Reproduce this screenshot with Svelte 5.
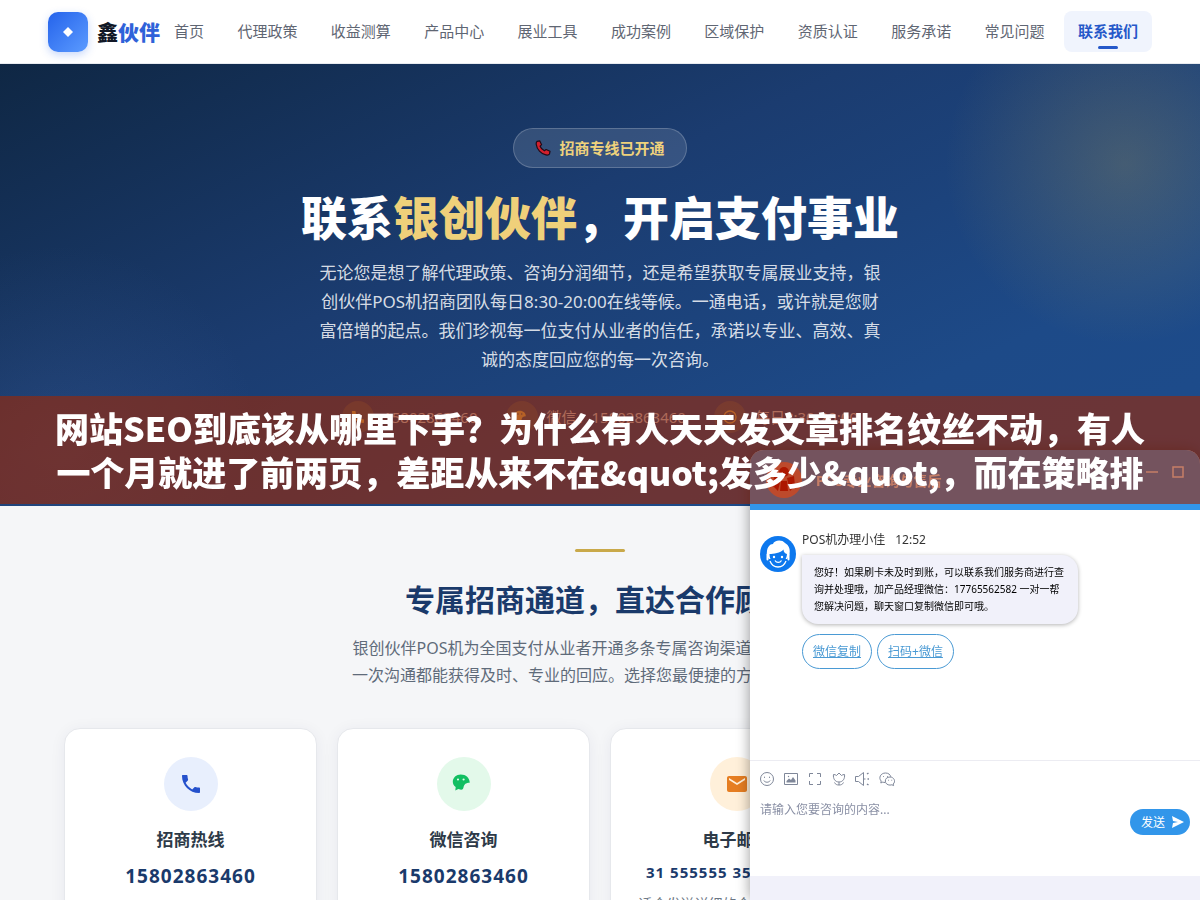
<script lang="ts">
  const navItems = [
    '首页',
    '代理政策',
    '收益测算',
    '产品中心',
    '展业工具',
    '成功案例',
    '区域保护',
    '资质认证',
    '服务承诺',
    '常见问题',
    '联系我们',
  ];
  const activeItem = '联系我们';

  const heroContacts = [
    { icon: 'phone', text: '15802863460' },
    { icon: 'wechat', text: '微信：15802863460' },
    { icon: 'clock', text: '每日8:30-20:00' },
  ];

  const channels = [
    { icon: 'phone', tone: 'blue', title: '招商热线', value: '15802863460', note: '每日8:30-20:00在线接听' },
    { icon: 'wechat', tone: 'green', title: '微信咨询', value: '15802863460', note: '添加微信获取代理政策' },
    { icon: 'mail', tone: 'orange', title: '电子邮箱', value: '31 555555 35@qq.com', note: '适合发送详细的合作需求与资料' },
    { icon: 'clock', tone: 'blue', title: '服务时间', value: '8:30-20:00', note: '全年无休在线服务' },
  ];

  const tools = ['smile', 'image', 'capture', 'flower', 'sound', 'chat'];
  const toolLabels: Record<string, string> = {
    smile: '表情',
    image: '图片',
    capture: '截图',
    flower: '评价',
    sound: '声音',
    chat: '微信',
  };

  let draft = $state('');
</script>

{#snippet glyph(name: string)}
  <svg viewBox="0 0 24 24" fill="currentColor" aria-hidden="true">
    {#if name === 'phone'}
      <path d="M6.62 10.79c-.27-.27.3-.3 0 0zM3.500 3H7.500c.55 0 1 .45 1 1 0 1.250.2 2.450.57 3.570.11.350.03.740-.25 1.020l-2.200 2.200c1.440 2.830 3.760 5.140 6.590 6.590l2.200-2.200c.27-.27.67-.36 1.020-.24 1.120.37 2.330.57 3.570.57.55 0 1 .45 1 1V20c0 .55-.45 1-1 1C10.610 21 3 13.390 3 4c0-.55.2-1 .5-1z" />
    {:else if name === 'wechat'}
      <path fill-rule="evenodd" d="M8.700 2.500C4.300 2.500.8 5.700.8 9.700c0 2.200 1.100 4 2.900 5.300L3.300 18.500l3-1.600 2.700.8c1.700.1 2.300-1.200 2.600-2.700.7-2.900 2.200-4.200 6.100-4.300C17.700 6 13.900 2.500 8.700 2.500zM6 6.400a1.100 1.100 0 1 1 0 2.200 1.100 1.100 0 0 1 0-2.200zm5.600 0a1.100 1.100 0 1 1 0 2.200 1.100 1.100 0 0 1 0-2.200z" />
    {:else if name === 'mail'}
      <path d="M20 4H4c-1.100 0-2 .9-2 2v12c0 1.100.9 2 2 2h16c1.100 0 2-.9 2-2V6c0-1.100-.9-2-2-2zm0 4-8 5-8-5V6l8 5 8-5z" />
    {:else}
      <path d="M12 2a10 10 0 1 0 0 20 10 10 0 0 0 0-20zm0 18a8 8 0 1 1 0-16 8 8 0 0 1 0 16zm.5-13H11v6l5.200 3.200.8-1.300-4.500-2.700z" />
    {/if}
  </svg>
{/snippet}

<div class="page">
  <header class="topbar">
    <div class="container topbar-inner">
      <a class="brand" href="#home">
        <span class="brand-mark">
          <svg viewBox="0 0 12 12" aria-hidden="true"><path d="M6 1l5 5-5 5-5-5z" fill="#fff" /></svg>
        </span>
        <span class="brand-name">鑫<em>伙伴</em></span>
      </a>
      <nav>
        {#each navItems as item}
          <a href="#nav" class:active={item === activeItem}>{item}</a>
        {/each}
      </nav>
    </div>
  </header>

  <section class="hero">
    <div class="badge">
      <svg viewBox="0 0 16 16" aria-hidden="true">
        <path
          d="M2.200 1.300 4.700.8l1.900 3.900-1.500 1.500c.8 2 2.300 3.600 4.300 4.600l1.700-1.300 3.900 1.800-.5 2.600c-.5 1-2 1.300-3.600 1C6 13.900 1.800 9.300 1.200 4.300c-.1-1.200.2-2.400 1-3z"
          fill="#d3202c" stroke="#200b18" stroke-width="1.200" stroke-linejoin="round"
        />
      </svg>
      招商专线已开通
    </div>
    <h1>联系<em>银创伙伴</em>，开启支付事业</h1>
    <p>
      无论您是想了解代理政策、咨询分润细节，还是希望获取专属展业支持，银创伙伴POS机招商团队每日8:30-20:00在线等候。一通电话，或许就是您财富倍增的起点。我们珍视每一位支付从业者的信任，承诺以专业、高效、真诚的态度回应您的每一次咨询。
    </p>
    <ul class="hero-contacts">
      {#each heroContacts as contact}
        <li>
          <span class="dot">{@render glyph(contact.icon)}</span>
          {contact.text}
        </li>
      {/each}
    </ul>
  </section>

  <section class="channels">
    <span class="rule"></span>
    <h2>专属招商通道，直达合作顾问</h2>
    <p class="lead">
      银创伙伴POS机为全国支付从业者开通多条专属咨询渠道，确保您的每一次沟通都能获得及时、专业的回应。选择您最便捷的方式，立即沟通
    </p>
    <div class="cards">
      {#each channels as channel}
        <article class="card">
          <span class="card-icon {channel.tone}">{@render glyph(channel.icon)}</span>
          <h3>{channel.title}</h3>
          <div class="value" class:small={channel.icon === 'mail'}>{channel.value}</div>
          <div class="note">{channel.note}</div>
        </article>
      {/each}
    </div>
  </section>
</div>

<aside class="chat">
  <header class="chat-head">
    <span class="chat-logo">
      <svg viewBox="0 0 36 36" aria-hidden="true">
        <circle cx="18" cy="18" r="18" fill="#e8806f" />
        <circle cx="18" cy="10" r="5" fill="#c00000" />
        <path d="M8 14l7 2-3 13-5-5zM28 14l-7 2 3 13 5-5zM15 19h6l1 10h-8z" fill="#c00000" />
      </svg>
    </span>
    <strong>POS专业咨询与售后</strong>
    <button aria-label="最小化"><svg viewBox="0 0 12 12"><path d="M0 6h12" /></svg></button>
    <button aria-label="最大化"><svg viewBox="0 0 12 12"><path d="M1 1h10v10H1z" /></svg></button>
  </header>

  <div class="messages">
    <svg class="avatar" viewBox="0 0 36 36" aria-hidden="true">
      <circle cx="18" cy="18" r="18" fill="#0d78ee" />
      <path d="M7 20C6 11 10 8 13 8c1-4 9-5 12-1 4 2 6 7 4 13l-2 3H9z" fill="#fff" />
      <path d="M9.500 18c4 0 11-1 14-4.500 0 2.500 1.500 4 3.500 4.500-.5 6-4 10-9 10s-8.500-4-8.500-10z" fill="#0d78ee" />
      <circle cx="14" cy="21" r="1.200" fill="#fff" />
      <circle cx="22" cy="21" r="1.200" fill="#fff" />
      <path d="M10 25c1.500 4 4.500 6 8 6s6.500-2 8-6M15 24.500c1.500 2.500 5 2.500 6.500 0" fill="none" stroke="#fff" stroke-width="1.300" />
      <path d="M7.500 18.500v5M28.500 18.500v5" stroke="#fff" stroke-width="2" stroke-linecap="round" />
    </svg>
    <div class="message">
      <div class="meta"><span>POS机办理小佳</span><time>12:52</time></div>
      <div class="bubble">
        您好！如果刷卡未及时到账，可以联系我们服务商进行查询并处理哦，加产品经理微信：17765562582 一对一帮您解决问题，聊天窗口复制微信即可哦。
      </div>
      <div class="quick">
        <a href="#copy">微信复制</a>
        <a href="#scan">扫码+微信</a>
      </div>
    </div>
  </div>

  <form class="composer" onsubmit={(e) => e.preventDefault()}>
    <div class="tools">
      {#each tools as tool}
        <button type="button" aria-label={toolLabels[tool]}>
          <svg viewBox="0 0 16 16">
            {#if tool === 'smile'}
              <circle cx="8" cy="8" r="6.500" />
              <path d="M4.800 9.500c1.200 2.300 5.200 2.300 6.400 0M5.500 5.700v1.200M10.500 5.700v1.200" />
            {:else if tool === 'image'}
              <path d="M1.500 2.500h13v11h-13z" />
              <path d="M3.500 11.500V10L6 7.500l2 1.500 2-3 2.500 3.500v2z" fill="currentColor" stroke="none" />
              <circle cx="5.500" cy="5.500" r=".7" fill="currentColor" stroke="none" />
            {:else if tool === 'capture'}
              <path d="M2.500 6V2.500H6M10 2.500h3.500V6M13.500 10v3.500H10M6 13.500H2.500V10" />
            {:else if tool === 'flower'}
              <path d="M2.500 3.500c1.200 0 2.200.3 3 1L8 2l2.500 2.500c.8-.7 1.800-1 3-1 .6 4-1.500 7.500-5.500 7.500S1.900 7.500 2.500 3.500zM8 11v3M3.500 11.500c1 2 2.500 2.500 4.500 2.500s3.500-.5 4.500-2.500" />
            {:else if tool === 'sound'}
              <path d="M.5 5.500h3l5-4v13l-5-4h-3zM8.500 8h2" />
              <path d="M12 3l1.500-1M12.500 8H14M12 13l1.500 1" stroke-width="1.500" />
            {:else}
              <path d="M6 11.500c-.8 0-1.500-.1-2.200-.4L1.800 12l.4-2C-.8 7 1.500 2 6.500 2c2.800 0 4.800 1.500 5.300 3.800" />
              <path d="M11 6c-2.800 0-4.700 1.700-4.700 4s2 4.100 4.700 4.100c.7 0 1.300-.1 1.900-.3l1.700.8-.4-1.600C17.100 10.500 15 6 11 6zM4.500 5v.8M8.500 5v.8M9.500 8.800v.8M12.700 8.800v.8" />
            {/if}
          </svg>
        </button>
      {/each}
    </div>
    <div class="entry">
      <textarea aria-label="咨询内容" placeholder="请输入您要咨询的内容..." bind:value={draft}></textarea>
      <button class="send" type="submit">
        发送
        <svg viewBox="0 0 14 14" aria-hidden="true"><path d="M1 1l12 6-12 6 1-5 5-1-5-1z" fill="#fff" /></svg>
      </button>
    </div>
  </form>
  <div class="chat-foot"></div>
</aside>

<div class="banner">
  <div class="banner-text">
    网站SEO到底该从哪里下手？为什么有人天天发文章排名纹丝不动，有人<br />一个月就进了前两页，差距从来不在&amp;quot;发多少&amp;quot;，而在策略排
  </div>
</div>

<style>
  :global(body) {
    font-family: 'Noto Sans', 'Noto Sans CJK SC', sans-serif;
    color: #2d3748;
  }

  .page {
    height: 100vh;
    overflow: hidden;
    background: #f5f6f8;
  }

  em {
    font-style: normal;
  }

  a {
    text-decoration: none;
  }

  button {
    font-family: inherit;
    border: none;
    background: none;
    padding: 0;
    cursor: pointer;
  }

  .container {
    max-width: 1200px;
    margin: 0 auto;
    padding: 0 48px;
  }

  .topbar {
    background: #fff;
    border-bottom: 1px solid #e8ebf0;
  }

  .topbar-inner {
    height: 63px;
    display: flex;
    align-items: center;
    justify-content: space-between;
  }

  .brand {
    display: flex;
    align-items: center;
    gap: 9px;
    color: #111827;
  }

  .brand-mark {
    width: 40px;
    height: 40px;
    border-radius: 10px;
    background: linear-gradient(135deg, #2563eb, #5b9bff);
    box-shadow: 0 3px 8px rgba(37, 99, 235, 0.25);
    display: flex;
    align-items: center;
    justify-content: center;
  }

  .brand-mark svg {
    width: 12px;
    height: 12px;
  }

  .brand-name {
    font-size: 21px;
    font-weight: 800;
    line-height: 40px;
    white-space: nowrap;
  }

  .brand-name em {
    color: #2f62d9;
  }

  nav {
    display: flex;
    justify-content: space-between;
    flex: 1;
  }

  nav a {
    position: relative;
    padding: 0 14px;
    border-radius: 8px;
    font-size: 15px;
    line-height: 41px;
    color: #5f6673;
    white-space: nowrap;
  }

  nav a.active {
    background: #f0f4fd;
    color: #2558c9;
    font-weight: 600;
  }

  nav a.active::after {
    content: '';
    position: absolute;
    left: 50%;
    bottom: 3px;
    width: 20px;
    height: 3px;
    border-radius: 2px;
    background: #2558c9;
    transform: translateX(-50%);
  }

  .hero {
    display: flex;
    flex-direction: column;
    align-items: center;
    padding: 64px 24px 73px;
    text-align: center;
    color: #fff;
    background:
      radial-gradient(circle at 1125px 100px, rgba(201, 169, 74, 0.23), transparent 180px),
      radial-gradient(circle at 60px 380px, rgba(90, 130, 200, 0.14), transparent 200px),
      linear-gradient(155deg, #0f2744 0%, #1b3c70 40%, #1d4a88 75%, #1d4c8c 100%);
  }

  .badge {
    display: flex;
    align-items: center;
    gap: 8px;
    padding: 0 21px;
    border: 1px solid rgba(255, 255, 255, 0.2);
    border-radius: 20px;
    background: rgba(255, 255, 255, 0.12);
    color: #efd27c;
    font-size: 15px;
    font-weight: 600;
    line-height: 38px;
  }

  .badge svg {
    width: 16px;
    height: 16px;
  }

  h1 {
    margin: 20px 0 12px;
    font-size: 46px;
    font-weight: 800;
    line-height: 58px;
  }

  h1 em {
    color: #efd07a;
  }

  .hero p {
    max-width: 570px;
    margin: 0;
    font-size: 17px;
    line-height: 29px;
    color: rgba(255, 255, 255, 0.84);
  }

  .hero-contacts {
    display: flex;
    gap: 28px;
    margin: 27px 0 0;
    padding: 0;
    list-style: none;
    font-size: 15px;
    line-height: 32px;
    color: rgba(255, 255, 255, 0.75);
  }

  .hero-contacts li {
    display: flex;
    align-items: center;
    gap: 9px;
  }

  .dot {
    width: 32px;
    height: 32px;
    border-radius: 50%;
    background: rgba(201, 169, 74, 0.2);
    color: #d8b860;
    display: flex;
    align-items: center;
    justify-content: center;
  }

  .dot svg {
    width: 16px;
    height: 16px;
  }

  .channels {
    display: flex;
    flex-direction: column;
    align-items: center;
    max-width: 1072px;
    margin: 0 auto;
    padding: 43px 64px 60px;
    text-align: center;
  }

  .rule {
    width: 50px;
    height: 3px;
    border-radius: 2px;
    background: #c9a94a;
  }

  h2 {
    margin: 28px 0 15px;
    font-size: 30px;
    font-weight: 700;
    line-height: 40px;
    color: #1a3a6b;
  }

  .lead {
    max-width: 500px;
    margin: 0 0 39px;
    font-size: 16px;
    line-height: 27px;
    color: #5f6b7a;
  }

  .cards {
    align-self: stretch;
    display: grid;
    grid-template-columns: repeat(4, 1fr);
    gap: 20px;
  }

  .card {
    display: flex;
    flex-direction: column;
    align-items: center;
    padding: 28px 20px;
    border: 1px solid #e6e8ec;
    border-radius: 16px;
    background: #fff;
    box-shadow: 0 2px 16px rgba(20, 40, 80, 0.06);
  }

  .card-icon {
    width: 54px;
    height: 54px;
    border-radius: 50%;
    display: flex;
    align-items: center;
    justify-content: center;
  }

  .card-icon svg {
    width: 24px;
    height: 24px;
  }

  .blue {
    background: #e8effd;
    color: #2551cc;
  }

  .green {
    background: #e3f9ea;
    color: #12bf62;
  }

  .orange {
    background: #fff0da;
    color: #e67e22;
  }

  h3 {
    margin: 16px 0 8px;
    font-size: 17px;
    font-weight: 700;
    line-height: 26px;
    color: #2d3a48;
  }

  .value {
    font-size: 19px;
    font-weight: 700;
    line-height: 30px;
    letter-spacing: 1px;
    white-space: nowrap;
    color: #1a3a6b;
  }

  .value.small {
    font-size: 15px;
    line-height: 23px;
  }

  .note {
    margin-top: 8px;
    font-size: 14px;
    line-height: 24px;
    color: #6b7684;
  }

  .chat {
    position: fixed;
    right: 0;
    bottom: 0;
    width: 450px;
    max-width: 100%;
    height: 50vh;
    display: flex;
    flex-direction: column;
    overflow: hidden;
    border-radius: 14px 14px 0 0;
    background: #fff;
    box-shadow: 0 0 14px rgba(0, 0, 0, 0.4);
  }

  .chat-head {
    display: flex;
    align-items: center;
    gap: 14px;
    height: 60px;
    flex-shrink: 0;
    padding: 0 16px;
    background: #3296ea;
    color: #fff;
  }

  .chat-head strong {
    flex: 1;
    font-size: 14px;
  }

  .chat-head button {
    align-self: flex-start;
    padding-top: 14px;
    color: #fff;
  }

  .chat-head button svg {
    width: 12px;
    height: 12px;
    fill: none;
    stroke: currentColor;
    stroke-width: 1.5;
  }

  .chat-logo,
  .chat-logo svg {
    display: block;
    width: 36px;
    height: 36px;
  }

  .messages {
    flex: 1;
    display: flex;
    align-items: flex-start;
    gap: 6px;
    padding: 20px 10px;
  }

  .avatar {
    width: 36px;
    height: 36px;
    margin-top: 6px;
    flex-shrink: 0;
  }

  .meta {
    display: flex;
    gap: 10px;
    font-size: 12px;
    line-height: 20px;
    color: #333;
  }

  .bubble {
    box-sizing: border-box;
    max-width: 276px;
    margin-top: 5px;
    padding: 9px 12px;
    border-radius: 0 16px 16px 16px;
    background: #f1f1fa;
    box-shadow: 0 1px 4px rgba(0, 0, 0, 0.3);
    font-size: 10px;
    line-height: 17px;
    color: #000;
  }

  .quick {
    display: flex;
    gap: 5px;
    margin-top: 10px;
  }

  .quick a {
    padding: 0 10px;
    border: 1px solid #4a9ad4;
    border-radius: 18px;
    font-size: 12px;
    line-height: 33px;
    color: #4a9ad4;
    text-decoration: underline;
  }

  .composer {
    display: flex;
    flex-direction: column;
    height: 115px;
    flex-shrink: 0;
    border-top: 1px solid #ececf2;
  }

  .tools {
    display: flex;
    gap: 8px;
    padding: 10px 9px 8px;
  }

  .tools button {
    height: 16px;
    color: #7f8799;
  }

  .tools svg {
    display: block;
    width: 16px;
    height: 16px;
    fill: none;
    stroke: currentColor;
    stroke-width: 1;
  }

  .entry {
    flex: 1;
    display: flex;
    align-items: flex-start;
    gap: 10px;
    padding: 5px 10px 0;
  }

  textarea {
    flex: 1;
    height: 60px;
    padding: 0;
    border: none;
    outline: none;
    resize: none;
    background: none;
    font-family: inherit;
    font-size: 12px;
    line-height: 20px;
  }

  textarea::placeholder {
    color: #8a90a5;
  }

  .send {
    display: flex;
    align-items: center;
    justify-content: center;
    gap: 6px;
    width: 60px;
    height: 26px;
    margin-top: 9px;
    padding-left: 6px;
    border-radius: 13px;
    background: #3296ea;
    color: #fff;
    font-size: 12px;
    white-space: nowrap;
  }

  .send svg {
    width: 14px;
    height: 14px;
  }

  .chat-foot {
    height: 24px;
    flex-shrink: 0;
    background: #f1f1fa;
  }

  .banner {
    position: fixed;
    left: 0;
    right: 0;
    top: 50%;
    transform: translateY(-50%);
    padding: 10px 24px;
    background: rgba(160, 38, 0, 0.6);
  }

  .banner-text {
    font-family: 'Noto Sans CJK SC', sans-serif;
    font-size: 34px;
    font-weight: 900;
    line-height: 44px;
    text-align: center;
    color: #fff;
  }
</style>
